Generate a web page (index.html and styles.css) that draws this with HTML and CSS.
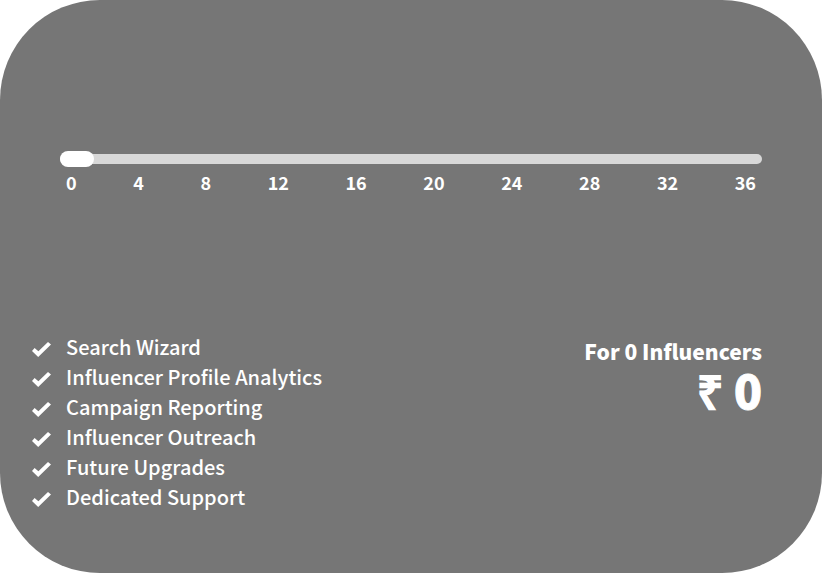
FILE: index.html
```html
<!DOCTYPE html>
<html lang="en">
<head>
<meta charset="utf-8">
<title>Influencer pricing</title>
<link rel="stylesheet" href="styles.css">
</head>
<body>
<main class="card">
  <section class="picker">
    <input class="slider" type="range" min="0" max="36" step="4" value="0" aria-label="Number of influencers">
    <div class="scale">
      <span>0</span><span>4</span><span>8</span><span>12</span><span>16</span><span>20</span><span>24</span><span>28</span><span>32</span><span>36</span>
    </div>
  </section>
  <section class="summary">
    <ul class="features">
      <li><svg class="check" viewBox="0 0 19 15" aria-hidden="true"><path d="M0 9 2.600 6 6.400 9.300 16 0 19 2.500 6.200 15Z"/></svg>Search Wizard</li>
      <li><svg class="check" viewBox="0 0 19 15" aria-hidden="true"><path d="M0 9 2.600 6 6.400 9.300 16 0 19 2.500 6.200 15Z"/></svg>Influencer Profile Analytics</li>
      <li><svg class="check" viewBox="0 0 19 15" aria-hidden="true"><path d="M0 9 2.600 6 6.400 9.300 16 0 19 2.500 6.200 15Z"/></svg>Campaign Reporting</li>
      <li><svg class="check" viewBox="0 0 19 15" aria-hidden="true"><path d="M0 9 2.600 6 6.400 9.300 16 0 19 2.500 6.200 15Z"/></svg>Influencer Outreach</li>
      <li><svg class="check" viewBox="0 0 19 15" aria-hidden="true"><path d="M0 9 2.600 6 6.400 9.300 16 0 19 2.500 6.200 15Z"/></svg>Future Upgrades</li>
      <li><svg class="check" viewBox="0 0 19 15" aria-hidden="true"><path d="M0 9 2.600 6 6.400 9.300 16 0 19 2.500 6.200 15Z"/></svg>Dedicated Support</li>
    </ul>
    <div class="quote">
      <p class="plan">For 0 Influencers</p>
      <p class="price">₹ 0</p>
    </div>
  </section>
</main>
</body>
</html>
```

FILE: styles.css
```css
* { box-sizing: border-box; }
body {
  margin: 0;
  font-family: "Noto Sans CJK JP", "Open Sans", sans-serif;
  color: #fff;
}
.card {
  min-height: 100vh;
  padding: 151px 60px 60px 32px;
  background: #767676;
  border-radius: 100px;
}
.picker { margin-left: 28px; }
.slider {
  display: block;
  width: 100%;
  height: 16px;
  margin: 0;
  appearance: none;
  background: none;
}
.slider::-webkit-slider-runnable-track {
  height: 10px;
  background: #d8d8d8;
  border-radius: 5px;
}
.slider::-webkit-slider-thumb {
  appearance: none;
  width: 34px;
  height: 16px;
  margin-top: -3px;
  background: #fff;
  border-radius: 8px;
}
.scale {
  display: flex;
  justify-content: space-between;
  padding: 0 6px;
  margin-top: 1px;
  font-size: 18px;
  line-height: 28px;
  font-weight: 700;
}
.summary {
  display: flex;
  justify-content: space-between;
  margin-top: 136px;
}
.features {
  margin: 0;
  padding: 0;
  list-style: none;
  font-size: 20px;
  line-height: 30px;
  font-weight: 500;
}
.features li {
  display: flex;
  align-items: center;
  gap: 15px;
}
.check {
  width: 19px;
  height: 15px;
  margin-top: 5px;
  fill: #fff;
}
.quote {
  text-align: right;
  font-weight: 900;
}
.quote p { margin: 0; }
.plan {
  font-size: 21px;
  line-height: 38px;
}
.price {
  font-size: 46px;
  line-height: 38px;
  -webkit-text-stroke: 1px #fff;
}
```
